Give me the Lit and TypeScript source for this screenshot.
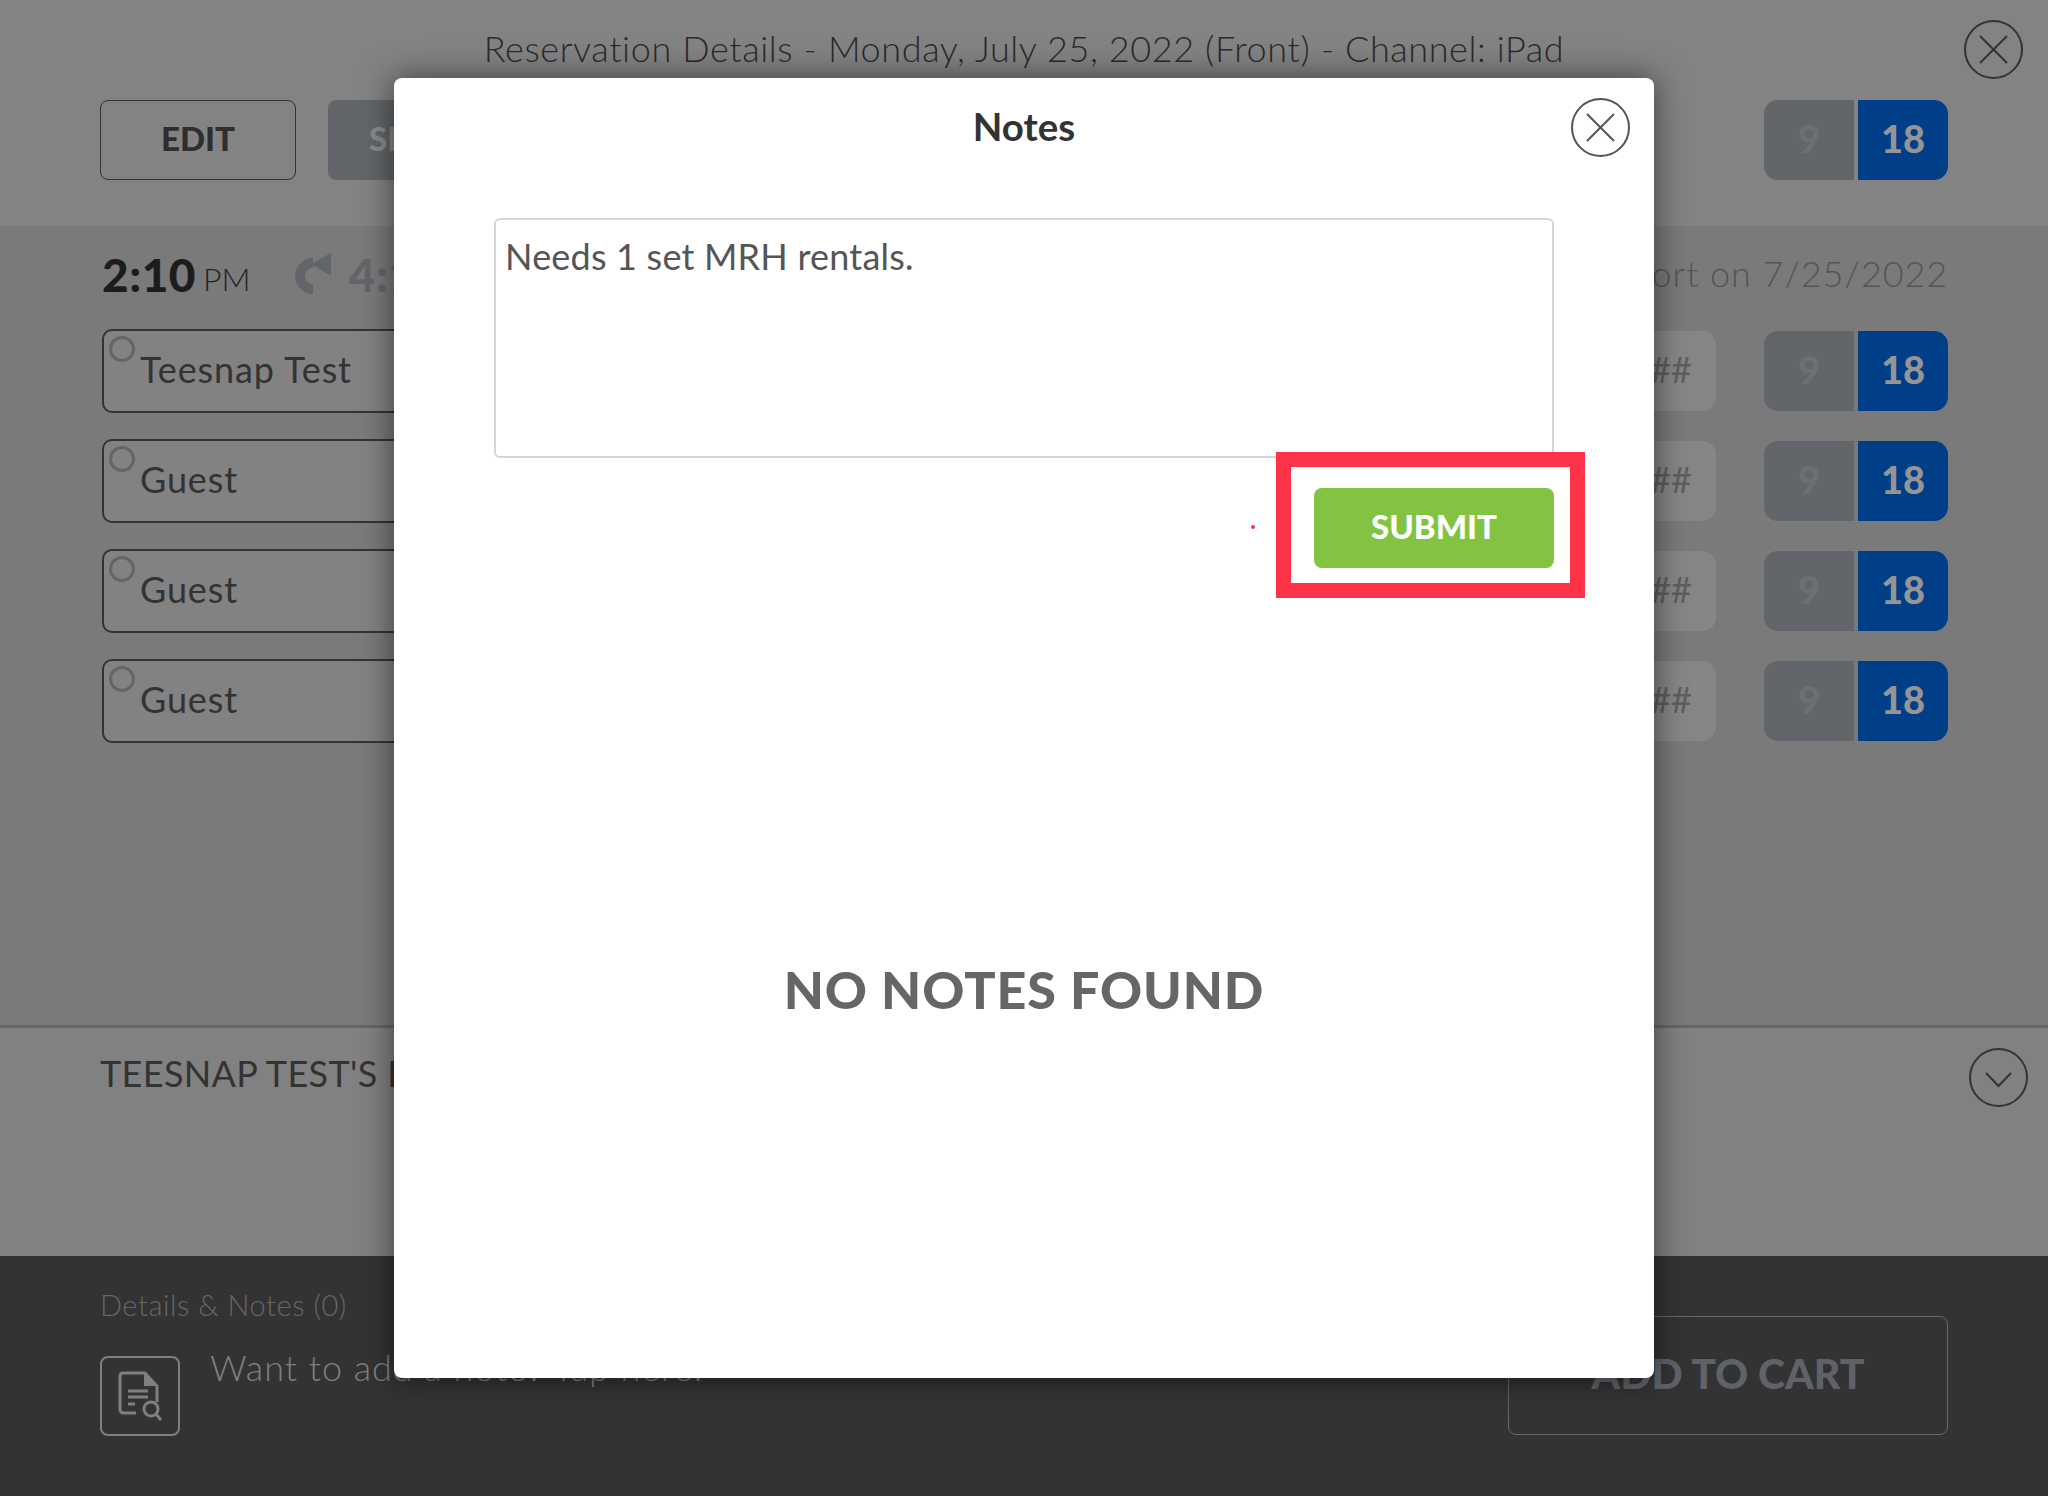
import { LitElement, html, css, svg } from "lit";
import { customElement } from "lit/decorators.js";

const xIcon = svg`<line x1="16" y1="16" x2="43" y2="43"/><line x1="43" y1="16" x2="16" y2="43"/>`;

@customElement("app-root")
export class AppRoot extends LitElement {
  static styles = css`
    :host { display: block; width: 2048px; height: 1496px; position: relative; overflow: hidden;
      font-family: Lato, "Open Sans", sans-serif; color: #333; background: #838383; }
    * { box-sizing: border-box; }
    .page { display: flex; flex-direction: column; height: 1496px; }
    .head { height: 226px; background: #838383; padding: 20px 25px 0 100px; display: grid;
      grid-template-columns: 1fr 59px; grid-template-rows: 59px 80px; row-gap: 21px; align-content: start; }
    .title { font-size: 36px; font-weight: 300; text-align: center; line-height: 56px; padding-right: 16px; color: #2a2a2a; letter-spacing: .6px; white-space: nowrap; }
    .circle { width: 59px; height: 59px; border: 2px solid #333; border-radius: 50%; display: flex; align-items: center; justify-content: center; }
    .circle svg { width: 59px; height: 59px; flex: none; stroke: #333; stroke-width: 2; fill: none; }
    .toolbar { grid-column: 1 / 3; display: flex; gap: 32px; padding-right: 75px; align-items: center; }
    .edit { width: 196px; height: 80px; border: 1px solid #333; border-radius: 8px; display: flex; align-items: center; justify-content: center; font-size: 33px; font-weight: 900; color: #2e2e2e; padding-bottom: 4px; }
    .send { width: 240px; height: 80px; background: #62666a; border-radius: 8px; font-size: 33px; font-weight: 900; color: #8a8a8a; display: flex; align-items: center; padding-left: 41px; padding-bottom: 4px; }
    .toggle { display: flex; width: 184px; height: 80px; margin-left: auto; gap: 4px; flex: none; }
    .toggle span { flex: 1; display: flex; align-items: center; justify-content: center; font-size: 38px; font-weight: 900; padding-bottom: 5px; }
    .nine { background: #62666a; color: #6f6f6f; border-radius: 14px 0 0 14px; }
    .eighteen { background: #003f87; color: #959595; border-radius: 0 14px 14px 0; }
    .main { height: 802px; background: #7a7a7a; border-bottom: 3px solid #666; padding: 18px 100px 0 102px; display: flex; flex-direction: column; }
    .timeline { display: flex; align-items: center; height: 60px; margin-bottom: 25px; }
    .time { font-size: 46px; font-weight: 900; color: #1c1c1c; letter-spacing: .5px; }
    .pm { font-size: 32px; font-weight: 300; margin-left: 7px; color: #222; padding-top: 9px; }
    .redo { width: 44px; height: 44px; margin-left: 38px; flex: none; }
    .alt { font-size: 46px; font-weight: 900; color: #62666a; margin-left: 16px; letter-spacing: .5px; }
    .report { margin-left: auto; font-size: 36px; font-weight: 300; color: #555; letter-spacing: .9px; padding-bottom: 2px; }
    .rows { display: flex; flex-direction: column; gap: 26px; }
    .row { display: flex; align-items: center; height: 84px; }
    .player { position: relative; flex: 1; height: 84px; border: 2px solid #333; border-radius: 10px; background: #828282; display: flex; align-items: center; padding-left: 36px; padding-bottom: 5px; font-size: 36px; color: #333; letter-spacing: .9px; }
    .player::before { content: ""; position: absolute; left: 5px; top: 5px; width: 20px; height: 20px; border: 3px solid #62666a; border-radius: 50%; }
    .hash { width: 200px; height: 80px; margin: 0 48px 0 20px; background: #868686; border-radius: 14px; display: flex; align-items: center; justify-content: flex-end; padding-right: 24px; padding-bottom: 5px; font-size: 36px; color: #5e5e5e; flex: none; }
    .rows .toggle { margin-left: 0; }
    .guest { height: 228px; background: #818181; padding: 20px 20px 0 100px; display: flex; justify-content: space-between; align-items: flex-start; }
    .guest-name { font-size: 36px; line-height: 56px; color: #333; font-weight: 400; letter-spacing: .35px; margin-top: -3px; }
    .foot { height: 240px; background: #333; padding: 28px 100px 0; display: grid; grid-template-columns: 80px 1fr 440px; grid-template-rows: 42px auto; column-gap: 30px; }
    .foot-label { grid-column: 1 / 3; font-size: 29px; font-weight: 300; color: #666; line-height: 42px; letter-spacing: .55px; }
    .notebox { grid-row: 2; width: 80px; height: 80px; margin-top: 30px; border: 2px solid #7f7f7f; border-radius: 8px; display: flex; align-items: center; justify-content: center; padding-left: 4px; }
    .notebox svg { width: 48px; height: 50px; }
    .want { grid-row: 2; font-size: 36px; font-weight: 300; color: #7f7f7f; line-height: 52px; margin-top: 15px; letter-spacing: .95px; }
    .cart { grid-column: 3; grid-row: 1 / 3; margin-top: 32px; height: 119px; border: 1px solid #666; border-radius: 8px; display: flex; align-items: center; justify-content: center; font-size: 41px; font-weight: 900; color: #5f6368; padding-bottom: 5px; }
    .modal { position: absolute; left: 394px; top: 78px; width: 1260px; height: 1300px; background: #fff; border-radius: 8px; box-shadow: 0 0 32px rgba(0,0,0,.55); padding: 0 100px; display: flex; flex-direction: column; }
    .modal-head { position: relative; height: 140px; display: flex; justify-content: center; padding-top: 19px; }
    .modal-title { font-size: 38.5px; font-weight: 700; color: #333; line-height: 58px; }
    .modal-close { position: absolute; right: -76px; top: 20px; border-color: #5a504c; }
    .modal-close svg { stroke: #5a504c; }
    textarea { display: block; width: 1060px; height: 240px; border: 2px solid #d6d6d6; border-radius: 6px; padding: 10px 9px; font: 400 36px/52px Lato, sans-serif; color: #555; letter-spacing: .2px; resize: none; outline: none; background: #fff; margin: 0; }
    .actions { display: flex; justify-content: flex-end; padding: 30px 0 0; }
    .submit { width: 240px; height: 80px; background: #82c341; border-radius: 8px; color: #fff; display: flex; align-items: center; justify-content: center; font-size: 33px; font-weight: 900; padding-bottom: 5px; }
    .empty { margin-top: 389px; text-align: center; font-size: 52px; font-weight: 900; color: #666; line-height: 64px; letter-spacing: .9px; }
    .mark { position: absolute; left: 1276px; top: 452px; width: 309px; height: 146px; border: 15px solid #ff3347; }
    .dot { position: absolute; left: 1251px; top: 525px; width: 4px; height: 4px; border-radius: 50%; background: #ff3347; }
  `;

  private toggle() {
    return html`<div class="toggle"><span class="nine">9</span><span class="eighteen">18</span></div>`;
  }

  private row(name: string) {
    return html`<div class="row"><div class="player">${name}</div><div class="hash">####</div>${this.toggle()}</div>`;
  }

  render() {
    return html`
      <div class="page">
        <header class="head">
          <div class="title">Reservation Details - Monday, July 25, 2022 (Front) - Channel: iPad</div>
          <div class="circle"><svg viewBox="0 0 59 59">${xIcon}</svg></div>
          <div class="toolbar">
            <div class="edit">EDIT</div>
            <div class="send">SPLIT</div>
            ${this.toggle()}
          </div>
        </header>
        <section class="main">
          <div class="timeline">
            <span class="time">2:10</span><span class="pm">PM</span>
            <svg class="redo" viewBox="0 0 44 44">
              <path d="M24 37 A13 13 0 1 1 24 11" fill="none" stroke="#62666a" stroke-width="10"/>
              <path d="M22 12 L42 1 L42 24 Z" fill="#62666a"/>
            </svg>
            <span class="alt">4:10</span>
            <span class="report">Report on 7/25/2022</span>
          </div>
          <div class="rows">
            ${this.row("Teesnap Test")}${this.row("Guest")}${this.row("Guest")}${this.row("Guest")}
          </div>
        </section>
        <section class="guest">
          <div class="guest-name">TEESNAP TEST'S RESERVATION</div>
          <div class="circle"><svg viewBox="0 0 59 59"><polyline points="17,25 29.5,38 42,25"/></svg></div>
        </section>
        <footer class="foot">
          <div class="foot-label">Details &amp; Notes (0)</div>
          <div class="notebox">
            <svg viewBox="0 0 48 50" fill="none" stroke="#7f7f7f" stroke-width="3">
              <path d="M18 42 H6 Q2 42 2 38 V5 Q2 2 5 2 H27 L39 15 V31"/>
              <path d="M26 2 L39 15 H26 Z" fill="#7f7f7f" stroke="none"/>
              <path d="M10 20 H30 M10 26 H30 M10 33 H17"/>
              <circle cx="33" cy="38" r="7"/>
              <path d="M38 43 L43 49"/>
            </svg>
          </div>
          <div class="want">Want to add a note? Tap here!</div>
          <div class="cart">ADD TO CART</div>
        </footer>
      </div>
      <div class="modal">
        <div class="modal-head">
          <div class="modal-title">Notes</div>
          <div class="circle modal-close"><svg viewBox="0 0 59 59">${xIcon}</svg></div>
        </div>
        <textarea .value=${"Needs 1 set MRH rentals."}></textarea>
        <div class="actions"><div class="submit">SUBMIT</div></div>
        <div class="empty">NO NOTES FOUND</div>
      </div>
      <div class="dot"></div>
      <div class="mark"></div>
    `;
  }
}
